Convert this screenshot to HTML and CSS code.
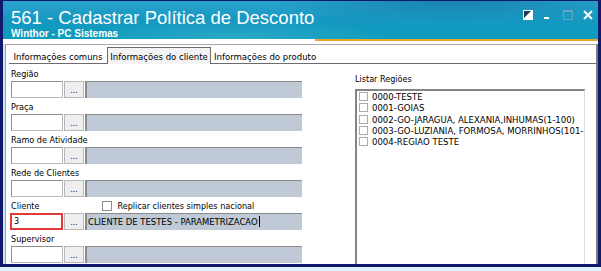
FILE: index.html
```html
<!DOCTYPE html>
<html lang="pt-BR">
<head>
  <meta charset="UTF-8" />
  <title>561 - Cadastrar Política de Desconto</title>
  <link rel="stylesheet" href="styles.css">
</head>
<body>
  <div class="window">
    <div class="titlebar">
      <div class="title-text">
        <div class="title">561 - Cadastrar Política de Desconto</div>
        <div class="subtitle">Winthor - PC Sistemas</div>
      </div>
      <div class="controls">
        <svg class="ctl" width="10" height="10" viewBox="0 0 10 10">
          <rect x="0" y="0" width="10" height="10" fill="#ffffff"/>
          <polygon points="1,1 8,1 1,8" fill="#1b3d57"/>
        </svg>
        <svg class="ctl" width="10" height="10" viewBox="0 0 10 10">
          <rect x="1" y="7" width="5" height="2" fill="#ffffff"/>
        </svg>
        <svg class="ctl" width="10" height="10" viewBox="0 0 10 10">
          <rect x="0.5" y="0.5" width="9" height="9" fill="none" stroke="#5fa9c2"/>
          <rect x="0" y="0" width="10" height="2" fill="#5fa9c2"/>
        </svg>
        <svg class="ctl" width="10" height="10" viewBox="0 0 10 10">
          <path d="M1 1 L9 9 M9 1 L1 9" stroke="#ffffff" stroke-width="2"/>
        </svg>
      </div>
    </div>
    <div class="accent"></div>

    <div class="frame">
      <div class="tabs">
        <div class="tab tab-1">Informações comuns</div>
        <div class="tab tab-2 active">Informações do cliente</div>
        <div class="tab tab-3">Informações do produto</div>
        <div class="tab-fill"></div>
      </div>

      <div class="panel">
        <div class="fields">
          <div class="field">
            <div class="label">Região</div>
            <div class="lookup">
              <div class="code"></div>
              <div class="dots">...</div>
              <div class="desc"></div>
            </div>
          </div>
          <div class="field">
            <div class="label">Praça</div>
            <div class="lookup">
              <div class="code"></div>
              <div class="dots">...</div>
              <div class="desc"></div>
            </div>
          </div>
          <div class="field">
            <div class="label">Ramo de Atividade</div>
            <div class="lookup">
              <div class="code"></div>
              <div class="dots">...</div>
              <div class="desc"></div>
            </div>
          </div>
          <div class="field">
            <div class="label">Rede de Clientes</div>
            <div class="lookup">
              <div class="code"></div>
              <div class="dots">...</div>
              <div class="desc"></div>
            </div>
          </div>
          <div class="field">
            <div class="label label-row">
              <span>Cliente</span>
              <span class="replicar"><span class="check"></span>Replicar clientes simples nacional</span>
            </div>
            <div class="lookup">
              <div class="code highlight">3</div>
              <div class="dots">...</div>
              <div class="desc">CLIENTE DE TESTES - PARAMETRIZACAO<span class="caret"></span></div>
            </div>
          </div>
          <div class="field">
            <div class="label">Supervisor</div>
            <div class="lookup">
              <div class="code"></div>
              <div class="dots">...</div>
              <div class="desc"></div>
            </div>
          </div>
        </div>

        <div class="regions">
          <div class="label">Listar Regiões</div>
          <div class="listbox">
            <div class="item"><span class="check"></span>0000-TESTE</div>
            <div class="item"><span class="check"></span>0001-GOIAS</div>
            <div class="item"><span class="check"></span>0002-GO-JARAGUA, ALEXANIA,INHUMAS(1-100)</div>
            <div class="item"><span class="check"></span>0003-GO-LUZIANIA, FORMOSA, MORRINHOS(101-</div>
            <div class="item"><span class="check"></span>0004-REGIAO TESTE</div>
          </div>
        </div>
      </div>
    </div>
  </div>
</body>
</html>
```

FILE: styles.css
```css
body {
  margin: 0;
  height: 271px;
  background-color: #dcf1fa;
  font-family: "DejaVu Sans Condensed", "Liberation Sans", sans-serif;
  font-size: 9px;
  color: #000;
  overflow: hidden;
}

.window {
  width: 601px;
  height: 267px;
  box-sizing: border-box;
  display: flex;
  flex-direction: column;
  background-color: #ffffff;
  border: 3px solid #12186e;
  border-top-width: 1px;
}

/* title bar */
.titlebar {
  height: 38px;
  flex-shrink: 0;
  box-sizing: border-box;
  display: flex;
  padding: 8px 5px 0 8px;
  color: #ffffff;
  background:
    radial-gradient(ellipse 260px 30px at 450px 0, rgba(6, 100, 145, 0.5), rgba(6, 100, 145, 0) 70%),
    radial-gradient(ellipse 240px 30px at 230px 40px, rgba(255, 255, 255, 0.14), rgba(255, 255, 255, 0) 70%),
    linear-gradient(180deg, #2aa3cb 0%, #1698c1 50%, #0c9dbd 100%);
}

.title {
  font-family: "Liberation Sans", Arial, sans-serif;
  font-size: 18.5px;
  line-height: 18px;
}

.subtitle {
  font-family: "Liberation Sans", Arial, sans-serif;
  font-size: 10px;
  font-weight: bold;
  line-height: 11px;
  margin-top: 1px;
}

.controls {
  margin-left: auto;
  display: flex;
  gap: 10px;
  padding-top: 1px;
}

.ctl {
  display: block;
}

.accent {
  height: 2px;
  flex-shrink: 0;
  margin-left: 312px;
  background-color: #eba42b;
}

/* tab frame */
.frame {
  flex: 1;
  margin: 3px 0 0 2px;
  display: flex;
  flex-direction: column;
  border-top: 1px solid #a9a9a9;
  border-left: 1px solid #a0a0a0;
  border-right: 2px solid #7c7c7c;
  box-shadow: -2px 0 0 #cfe7f3;
  overflow: hidden;
}

.tabs {
  display: flex;
  padding: 2px 0 0 3px;
  height: 19px;
  box-sizing: border-box;
}

.tab {
  height: 17px;
  box-sizing: border-box;
  padding-top: 3px;
  line-height: 13px;
  font-size: 9.5px;
  text-align: center;
  white-space: nowrap;
  border-bottom: 1px solid #6c6c6c;
}

.tab-1 { width: 98px; }
.tab-2 { width: 104px; }
.tab-3 { width: 118px; text-align: left; padding-left: 3px; }

.tab.active {
  border: 1px solid #6c6c6c;
  border-bottom: none;
  background-color: #f3f3f3;
  padding-top: 2px;
}

.tab-fill {
  flex: 1;
  border-bottom: 1px solid #6c6c6c;
}

.panel {
  flex: 1;
  display: grid;
  grid-template-columns: 291px 230px;
  column-gap: 53px;
  padding: 3px 0 0 5px;
}

/* lookup fields */
.field {
  margin-bottom: 2px;
}

.label {
  height: 14px;
  line-height: 14px;
  white-space: nowrap;
}

.label-row {
  display: flex;
}

.replicar {
  display: flex;
  align-items: center;
  margin-left: 63px;
}

.check {
  display: inline-block;
  width: 10px;
  height: 10px;
  box-sizing: border-box;
  border: 1px solid #8d8d8d;
  background-color: #ffffff;
  margin-right: 5px;
}

.lookup {
  display: flex;
  height: 17px;
}

.code {
  width: 52px;
  box-sizing: border-box;
  border: 1px solid #b9b9b9;
  border-top-color: #8f8f8f;
  border-left-color: #8f8f8f;
  background-color: #ffffff;
  padding-left: 2px;
  line-height: 15px;
}

.code.highlight {
  width: 53px;
  margin-left: -1px;
  border: 2px solid #e2393b;
  line-height: 13px;
}

.dots {
  width: 20px;
  margin-left: 1px;
  box-sizing: border-box;
  border: 1px solid #b8b8b8;
  background-color: #eeeeee;
  text-align: center;
  line-height: 18px;
  font-size: 8px;
}

.desc {
  flex: 1;
  margin-left: 1px;
  box-sizing: border-box;
  border-top: 1px solid #8a8a8a;
  border-left: 2px solid #8a8a8a;
  background-color: #bfcad6;
  padding-left: 1px;
  font-size: 9.4px;
  line-height: 15px;
  white-space: nowrap;
}

.caret {
  display: inline-block;
  width: 0;
  height: 11px;
  border-left: 1px solid #000;
  vertical-align: -2px;
  margin-left: 1px;
}

/* region list */
.regions {
  padding-top: 5px;
  display: flex;
  flex-direction: column;
}

.regions .label {
  margin-bottom: 3px;
}

.listbox {
  flex: 1;
  box-sizing: border-box;
  border-top: 2px solid #858585;
  border-left: 2px solid #858585;
  border-right: 1px solid #dedede;
  padding: 0 0 0 2px;
  font-size: 9.5px;
}

.item {
  display: flex;
  align-items: center;
  height: 11.3px;
  white-space: nowrap;
}

.item .check {
  width: 9px;
  height: 9px;
  border-color: #ababab;
  margin-right: 4px;
}
```
